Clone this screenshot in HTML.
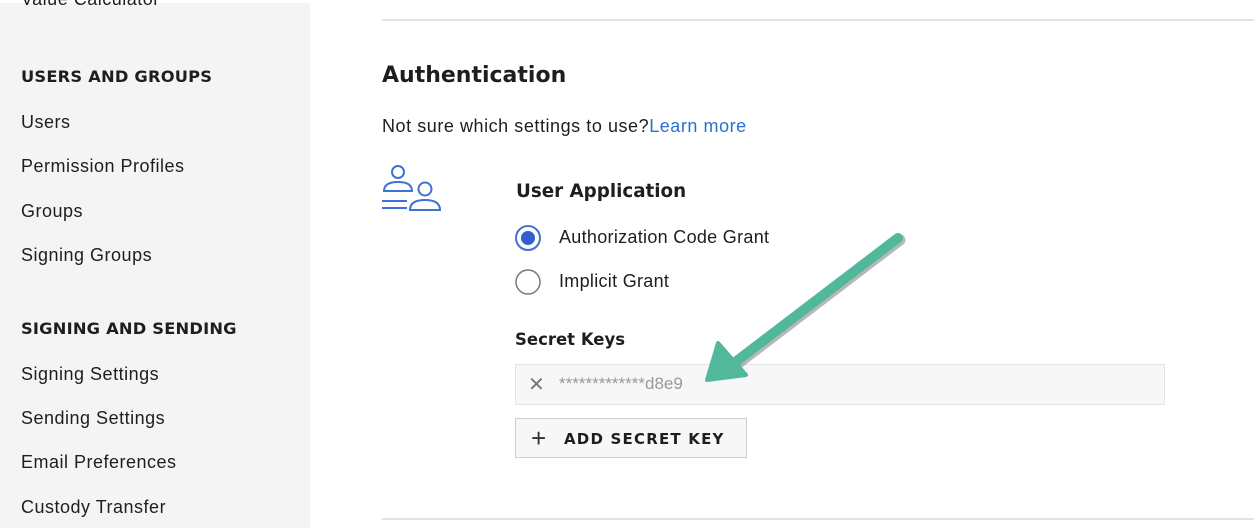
<!DOCTYPE html>
<html><head><style>
body{margin:0;width:1254px;height:528px;background:#fff;position:relative;overflow:hidden;font-family:"Liberation Sans",sans-serif;color:#1e1e1e}
.sb{position:absolute;left:0;top:3px;width:310px;height:525px;background:#f4f4f4}
.t{position:absolute;white-space:nowrap}
.n{font-size:18px;left:21px;letter-spacing:.5px}
.h{font-family:"DejaVu Sans",sans-serif;font-size:16.3px;font-weight:bold;left:21px;letter-spacing:.2px}
.d{font-family:"DejaVu Sans",sans-serif;font-weight:bold}
.line{position:absolute;left:382px;right:0;height:2px;background:#e2e2e2}
</style></head><body>
<div class="sb"></div>
<div class="t n" style="top:-11px">Value Calculator</div>
<div class="t h" style="top:67px">USERS AND GROUPS</div>
<div class="t n" style="top:112px">Users</div>
<div class="t n" style="top:156px">Permission Profiles</div>
<div class="t n" style="top:201px">Groups</div>
<div class="t n" style="top:245px">Signing Groups</div>
<div class="t h" style="top:319px">SIGNING AND SENDING</div>
<div class="t n" style="top:364px">Signing Settings</div>
<div class="t n" style="top:408px">Sending Settings</div>
<div class="t n" style="top:452px">Email Preferences</div>
<div class="t n" style="top:497px">Custody Transfer</div>
<div class="line" style="top:19px"></div>
<div class="line" style="top:518px"></div>
<div class="t d" style="left:382px;top:63px;font-size:22px">Authentication</div>
<div class="t" style="left:382px;top:116px;font-size:18px;letter-spacing:.55px">Not sure which settings to use?<span style="color:#2b6fd1">Learn more</span></div>
<svg style="position:absolute;left:380px;top:163px" width="64" height="50" viewBox="0 0 64 50" fill="none" stroke="#3f72d6" stroke-width="2">
<circle cx="18" cy="9" r="6"/><path d="M4 28 q0-9 14-9 q14 0 14 9 z"/>
<circle cx="45" cy="26" r="6.5"/><path d="M30 47 q0-10 15-10 q15 0 15 10 z"/>
<path d="M2 38h25M2 45h25"/>
</svg>
<div class="t d" style="left:516px;top:181px;font-size:18.3px">User Application</div>
<svg style="position:absolute;left:514px;top:224px" width="30" height="74">
<circle cx="14" cy="14" r="12" fill="#fff" stroke="#3f72d6" stroke-width="2"/><circle cx="14" cy="14" r="7" fill="#2f5fd0"/>
<circle cx="14" cy="58" r="12" fill="#fff" stroke="#777" stroke-width="1.5"/>
</svg>
<div class="t" style="left:559px;top:227px;font-size:18px;letter-spacing:.3px">Authorization Code Grant</div>
<div class="t" style="left:559px;top:271px;font-size:18px;letter-spacing:.3px">Implicit Grant</div>
<div class="t d" style="left:515px;top:330px;font-size:16.5px">Secret Keys</div>
<div style="position:absolute;left:515px;top:364px;width:648px;height:39px;background:#f7f7f7;border:1px solid #e4e4e4"></div>
<div class="t" style="left:528px;top:372px;font-size:20px;color:#777">✕</div>
<div class="t" style="left:559px;top:374px;font-size:17px;color:#999">*************d8e9</div>
<div style="position:absolute;left:515px;top:418px;width:230px;height:38px;background:#f7f7f7;border:1px solid #d0d0d0"></div>
<div class="t" style="left:531px;top:423px;font-size:26px;color:#333">+</div>
<div class="t d" style="left:564px;top:430px;font-size:15px;letter-spacing:1.2px">ADD SECRET KEY</div>
<svg style="position:absolute;left:690px;top:220px" width="230" height="180">
<path d="M208 18 L44 143" stroke="#333" stroke-opacity=".35" stroke-width="11" stroke-linecap="round" transform="translate(2,2)"/>
<path d="M208 18 L44 143" stroke="#52b89b" stroke-width="10" stroke-linecap="round"/>
<path d="M17 160 L28 123 L56 155 Z" fill="#52b89b" stroke="#52b89b" stroke-width="4" stroke-linejoin="round"/>
</svg>
</body></html>
